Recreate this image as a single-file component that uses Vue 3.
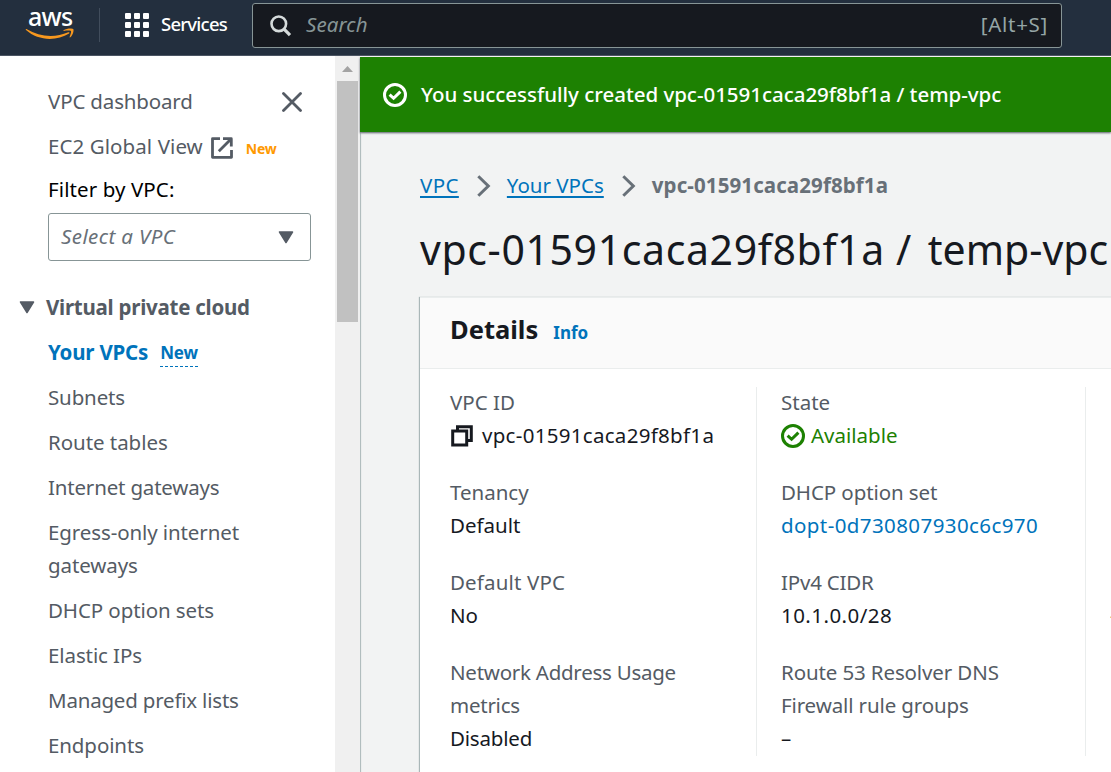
<script setup>
const links = [
  { text: 'Subnets', track: -0.14 },
  { text: 'Route tables', track: -0.05 },
  { text: 'Internet gateways', track: -0.18 },
  { text: 'Egress-only internet gateways', track: -0.1 },
  { text: 'DHCP option sets', track: -0.1 },
  { text: 'Elastic IPs', track: -0.1 },
  { text: 'Managed prefix lists', track: -0.2 },
  { text: 'Endpoints', track: -0.1 },
]

const columns = [
  [
    { label: 'VPC ID', value: 'vpc-01591caca29f8bf1a', icon: 'copy', valueTrack: 0.3 },
    { label: 'Tenancy', value: 'Default' },
    { label: 'Default VPC', value: 'No', labelTrack: 0.15 },
    { label: 'Network Address Usage metrics', value: 'Disabled', labelTrack: -0.25, valueTrack: -0.2 },
  ],
  [
    { label: 'State', value: 'Available', icon: 'check', kind: 'success' },
    { label: 'DHCP option set', value: 'dopt-0d730807930c6c970', kind: 'link', valueTrack: 0.41, labelTrack: -0.1 },
    { label: 'IPv4 CIDR', value: '10.1.0.0/28', valueTrack: 0.45, labelTrack: -0.2 },
    { label: 'Route 53 Resolver DNS Firewall rule groups', value: '–', labelTrack: -0.12 },
  ],
  [
    { label: '', value: '' },
    { label: '', value: '' },
    { label: '', value: '–' },
  ],
]

const spacing = (px) => ({ letterSpacing: `${px || 0}px` })
</script>

<template>
  <div class="console">
    <header class="topbar">
      <div class="logo">
        <span class="logo-text">aws</span>
        <svg class="smile" width="50" height="13" viewBox="0 0 50 13" fill="#f7981f">
          <path d="M1.400 1.100C15 9.200 30 10 43.300 4.300c1-.4 1.700.5.800 1.200C31.500 13.400 13 13 1 2.100c-.6-.6-.2-1.300.4-1z" />
          <path d="M38.500 2.300C41.500.2 47 0 48.200 1c1 1.200-.2 6.200-2.900 8.300-.5.400-.9.200-.7-.3.700-1.800 2-5.200 1.300-6-.7-.8-4.800-.4-7-.1-.6 0-.8-.3-.4-.6z" />
        </svg>
      </div>
      <div class="services">
        <svg width="24" height="24" viewBox="0 0 24 24" fill="#fff">
          <template v-for="r in 3" :key="r">
            <rect v-for="c in 3" :key="c" :x="(c - 1) * 9" :y="(r - 1) * 9" width="6" height="6" rx="1" />
          </template>
        </svg>
        <span>Services</span>
      </div>
      <div class="search">
        <svg width="22" height="22" viewBox="0 0 22 22" fill="none" stroke="#d5dbdb" stroke-width="2.600">
          <circle cx="8.800" cy="8.800" r="7.300" />
          <path d="M13.800 13.800l6.200 6.400" stroke-width="3.200" />
        </svg>
        <span class="search-text">Search</span>
        <span class="shortcut">[Alt+S]</span>
      </div>
    </header>

    <div class="body">
      <nav class="sidebar">
        <div class="row dashboard">
          <span>VPC dashboard</span>
          <svg width="20" height="20" viewBox="0 0 20 20" stroke="#545b64" stroke-width="2.800" stroke-linecap="round">
            <path d="M1.500 1.500l17 17M18.500 1.500l-17 17" />
          </svg>
        </div>
        <div class="row global">
          <span>EC2 Global View</span>
          <svg width="22" height="22" viewBox="0 0 22 22" fill="none" stroke="#545b64" stroke-width="2.800" stroke-linejoin="round">
            <path d="M9 1.700H1.500V20.300H20.500V13" />
            <path d="M12 1.700H20.300V9.500M20 2L7.800 14.200" />
          </svg>
          <b class="tag">New</b>
        </div>
        <div class="row filter">Filter by VPC:</div>
        <div class="select">
          <i>Select a VPC</i>
          <svg width="16" height="13" viewBox="0 0 16 13" fill="#545b64">
            <path d="M1.500 1h13L8 11.500z" stroke="#545b64" stroke-width="1.500" stroke-linejoin="round" />
          </svg>
        </div>
        <div class="row group">
          <svg width="16" height="13" viewBox="0 0 16 13" fill="#545b64">
            <path d="M1.500 1h13L8 11.500z" stroke="#545b64" stroke-width="1.500" stroke-linejoin="round" />
          </svg>
          <b>Virtual private cloud</b>
        </div>
        <div class="links">
          <div class="row active"><b>Your VPCs</b><b class="new">New</b></div>
          <div v-for="l in links" :key="l.text" class="row" :style="spacing(l.track)">{{ l.text }}</div>
        </div>
      </nav>
      <div class="scrollbar">
        <svg width="11" height="6" viewBox="0 0 11 6"><path d="M5.500 0L11 6H0z" fill="#a3a3a3" /></svg>
        <div class="thumb"></div>
      </div>

      <main class="main">
        <div class="banner">
          <svg width="24" height="24" viewBox="0 0 24 24" fill="none" stroke="#fff" stroke-width="3">
            <circle cx="12" cy="12" r="10.500" />
            <path d="M6.600 11.600l4 3.700 6.800-6.700" />
          </svg>
          <span>You successfully created vpc-01591caca29f8bf1a / temp-vpc</span>
        </div>
        <div class="content">
          <div class="crumbs">
            <a class="first">VPC</a>
            <svg width="14" height="22" viewBox="0 0 14 22" fill="none" stroke="#687078" stroke-width="3"><path d="M1.300 1.200L11.300 11 1.300 20.800" /></svg>
            <a>Your VPCs</a>
            <svg width="14" height="22" viewBox="0 0 14 22" fill="none" stroke="#687078" stroke-width="3"><path d="M1.300 1.200L11.300 11 1.300 20.800" /></svg>
            <b>vpc-01591caca29f8bf1a</b>
          </div>
          <h1>vpc-01591caca29f8bf1a / <span>temp-vpc</span></h1>
          <section class="card">
            <div class="card-head"><h2>Details</h2><b>Info</b></div>
            <div class="columns">
              <div v-for="(col, i) in columns" :key="i" class="column">
                <div v-for="(f, j) in col" :key="j" class="field">
                  <div class="label" :style="spacing(f.labelTrack)">{{ f.label }}</div>
                  <div class="value" :class="f.kind">
                    <svg v-if="f.icon === 'copy'" class="copy" width="22" height="22" viewBox="0 0 22 22" fill="none" stroke="#16191f" stroke-width="3">
                      <path d="M6.500 5V1.700H20.300V15.500H17" />
                      <rect x="1.700" y="6" width="14" height="14" />
                    </svg>
                    <svg v-if="f.icon === 'check'" class="check" width="24" height="24" viewBox="0 0 24 24" fill="none" stroke="#1d8102" stroke-width="3">
                      <circle cx="12" cy="12" r="10.500" />
                      <path d="M6.600 11.600l4 3.700 6.800-6.700" />
                    </svg>
                    <span :style="spacing(f.valueTrack)">{{ f.value }}</span>
                  </div>
                </div>
              </div>
            </div>
          </section>
        </div>
      </main>
    </div>
  </div>
</template>

<style>
body { margin: 0; overflow: hidden; }
</style>

<style scoped>
* { box-sizing: border-box; }
svg { display: block; flex: none; }
.console {
  width: 1111px; height: 772px; overflow: hidden; display: flex; flex-direction: column;
  background: #fff; color: #16191f; font: 20.5px/33px "Noto Sans", "Open Sans", sans-serif;
}
.topbar {
  height: 56px; flex: none; display: flex; align-items: flex-start;
  background: #232f3e; border-bottom: 1px solid #4b5563; color: #fff;
}
.logo { width: 100px; height: 34px; margin-top: 8px; border-right: 1px solid #414d5c; padding-left: 25px; }
.logo-text { display: block; height: 20px; line-height: 16px; font-size: 25px; font-weight: 500; letter-spacing: -0.7px; padding-left: 3px; }
.services { display: flex; align-items: center; gap: 12px; height: 49px; margin-left: 25px; width: 127px; font-size: 18.500px; font-weight: 500; letter-spacing: -0.75px; }
.services span { margin-top: -2px; }
.search {
  width: 810px; height: 45px; margin-top: 3px; display: flex; align-items: center; padding: 0 13px 0 17px;
  background: #16191f; border: 1px solid #879596; border-radius: 3px; color: #95a5a6;
}
.search-text { margin: -2px 0 0 14px; font-style: italic; color: #879596; letter-spacing: 0.1px; }
.shortcut { margin: -2px 0 0 auto; letter-spacing: 0.7px; }
.body { flex: 1; display: flex; min-height: 0; }
.sidebar { width: 335px; flex: none; padding: 29px 25px 0 48px; color: #545b64; overflow: hidden; }
.dashboard { display: flex; justify-content: space-between; align-items: center; padding-right: 8px; letter-spacing: -0.16px; }
.global { display: flex; align-items: center; margin-top: 12px; letter-spacing: 0.08px; }
.global svg { margin: 2px 0 0 8px; }
.tag { color: #ff9900; font-size: 14px; margin: 4px 0 0 13px; line-height: 20px; letter-spacing: -0.2px; }
.filter { margin-top: 10px; color: #000; letter-spacing: 0.1px; }
.select {
  width: 263px; height: 48px; margin-top: 7px; padding: 0 16px 0 12px; border: 1px solid #879596; border-radius: 3px;
  display: flex; justify-content: space-between; align-items: center; color: #687078;
}
.select i { margin-top: -2px; letter-spacing: 0.4px; }
.group { display: flex; align-items: center; gap: 11px; margin: 30px 0 0 -29px; letter-spacing: -0.25px; }
.group svg { margin-top: -1px; }
.links { display: flex; flex-direction: column; gap: 12px; margin-top: 12px; }
.active { display: flex; align-items: flex-start; color: #0073bb; letter-spacing: -0.2px; height: 33px; }
.new { font-size: 17px; line-height: 28px; height: 31px; padding-top: 3px; margin-left: 12px; border-bottom: 1px dashed #0073bb; letter-spacing: -0.2px; }
.scrollbar { width: 25px; flex: none; background: #f0f0f0; padding: 10px 2px 0; }
.scrollbar svg { margin: 0 auto; }
.thumb { height: 241px; margin-top: 9px; background: #c1c1c1; }
.main { flex: 1; min-width: 0; background: #f2f3f3; border-top: 1px solid #fff; box-shadow: inset 2px 0 1px -1px #aab7b8; }
.banner {
  height: 75px; display: flex; align-items: center; gap: 14px; padding-left: 23px;
  background: #1d8102; color: #fff; font-weight: 500; box-shadow: 0 1px 2px #545b64; white-space: nowrap; letter-spacing: -0.03px;
}
.content { padding: 37px 0 0 60px; }
.crumbs { display: flex; align-items: center; height: 33px; color: #687078; }
.crumbs a { color: #0073bb; text-decoration: underline; text-decoration-thickness: 2px; text-underline-offset: 3px; }
.crumbs .first { letter-spacing: 0.4px; }
.crumbs svg { margin: 0 16px 0 18px; }
.crumbs b { letter-spacing: 0.1px; }
h1 { margin: 17px 0 0; height: 78px; font-size: 41px; font-weight: 400; line-height: 60px; letter-spacing: 0.62px; white-space: nowrap; }
h1 span { letter-spacing: 0; margin-left: 4.500px; }
.card { width: 1050px; height: 480px; background: #fff; border-top: 1px solid #eaeded; box-shadow: -1px 0 1px #aab7b8; }
.card-head { height: 71px; padding: 15px 30px 0; display: flex; align-items: baseline; gap: 15px; background: #fafafa; border-bottom: 1px solid #eaeded; }
h2 { margin: 0; font-size: 25.500px; line-height: 33px; }
.card-head b { color: #0073bb; font-size: 17px; }
.columns { display: flex; padding: 18px 0 0 30px; }
.column { width: 329px; height: 369px; padding-left: 24px; border-left: 1px solid #eaeded; display: flex; flex-direction: column; gap: 24px; }
.column:first-child { width: 306px; padding: 0 60px 0 0; border: 0; }
.column:nth-child(2) { padding-right: 60px; }
.field { margin-top: -1px; margin-bottom: 1px; }
.label { color: #545b64; min-height: 33px; }
.value { display: flex; align-items: center; height: 33px; white-space: nowrap; }
.copy { margin-right: 9px; margin-left: 1px; }
.check { margin-right: 6px; }
.success { color: #1d8102; }
.link { color: #0073bb; }
</style>
